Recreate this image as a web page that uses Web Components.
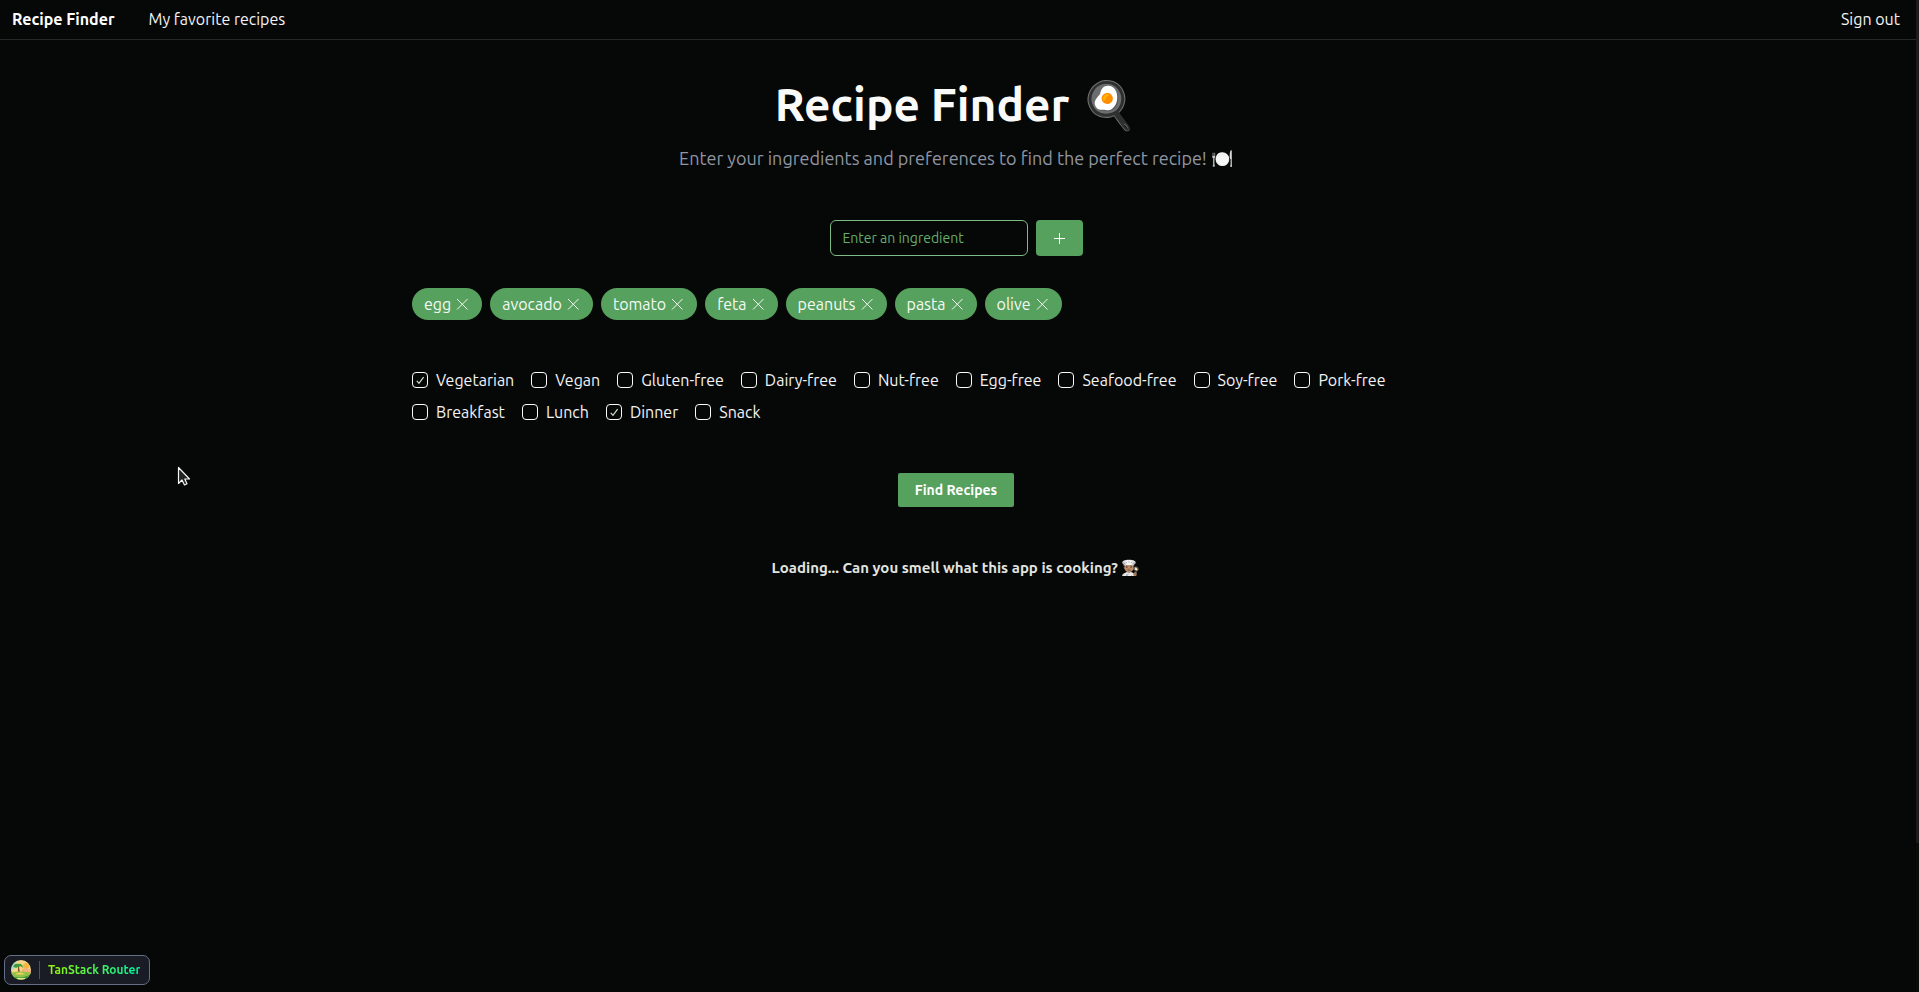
<!DOCTYPE html>
<html lang="en">
<head>
<meta charset="utf-8">
<title>Recipe Finder</title>
<style>
  html { background: #060807; }
  body { margin: 0; min-height: 100vh; color: #f4f4f5; font: 16px/24px Ubuntu, "Noto Sans", sans-serif; }
</style>
</head>
<body>
<recipe-app></recipe-app>
<script>
const define = (name, html, setup) => {
  const template = document.createElement('template');
  template.innerHTML = '<style>*{box-sizing:border-box}</style>' + html;
  customElements.define(name, class extends HTMLElement {
    constructor() {
      super();
      this.attachShadow({ mode: 'open' }).append(template.content.cloneNode(true));
    }
    connectedCallback() { if (setup) setup(this, this.shadowRoot); }
  });
};

define('site-header', `
<style>
  :host { display: block; border-bottom: 1px solid #27272a; }
  nav { display: flex; align-items: center; gap: 34px; height: 39px; padding: 0 16px 2px 12px; }
  a { color: #f4f4f5; text-decoration: none; }
  .brand { font-weight: 700; color: #fff; }
  .out { margin-left: auto; }
</style>
<nav>
  <a class="brand" href="#">Recipe Finder</a>
  <a href="#favorites">My favorite recipes</a>
  <a class="out" href="#signout">Sign out</a>
</nav>`);

define('page-hero', `
<style>
  :host { display: block; text-align: center; }
  h1 { margin: 0; font-size: 46px; line-height: 56px; font-weight: 700; color: #fafaf9; }
  p { margin: 12px 0 0; font-size: 18px; line-height: 28px; color: #9096a3; }
</style>
<h1><slot name="title"></slot></h1>
<p><slot></slot></p>`);

define('ingredient-form', `
<style>
  :host { display: block; }
  form { display: flex; justify-content: center; gap: 8px; }
  input { width: 198px; height: 36px; padding: 0 12px; border: 1px solid #7dba84; border-radius: 6px;
    background: transparent; color: #f4f4f5; font: 14px/20px Ubuntu, "Noto Sans", sans-serif; }
  input::placeholder { color: #66ae6c; opacity: 1; }
  button { display: grid; place-items: center; width: 47px; height: 36px; padding: 0; border: 0;
    border-radius: 4px; background: #56a15d; color: #fff; }
</style>
<form>
  <input type="text" aria-label="Ingredient" placeholder="Enter an ingredient">
  <button type="button" aria-label="Add ingredient">
    <svg width="15" height="15" viewBox="0 0 15 15" fill="none" stroke="currentColor"><path d="M7.5 2v11M2 7.5h11"/></svg>
  </button>
</form>`);

define('ingredient-tag', `
<style>
  :host { display: flex; align-items: center; gap: 3px; height: 32px; padding: 0 12px; border-radius: 16px;
    background: #56a15d; color: #f4faf4; }
  button { display: flex; padding: 0; border: 0; background: none; color: inherit; }
</style>
<slot></slot>
<button type="button" aria-label="Remove">
  <svg width="16" height="16" viewBox="0 0 16 16" fill="none" stroke="currentColor"><path d="M3 3l10.500 10.500M13.500 3L3 13.500"/></svg>
</button>`);

define('check-option', `
<style>
  :host { display: block; }
  label { display: flex; align-items: center; gap: 8px; }
  .box { display: grid; width: 16px; height: 16px; }
  input, svg { grid-area: 1 / 1; width: 16px; height: 16px; margin: 0; }
  input { appearance: none; border: 1px solid #fafafa; border-radius: 4px; }
  svg { visibility: hidden; pointer-events: none; }
  input:checked + svg { visibility: visible; }
</style>
<label>
  <span class="box">
    <input type="checkbox">
    <svg viewBox="0 0 16 16" fill="none" stroke="#cfe3d0" stroke-width="1.200"><path d="M4.800 8.800L7 11.400 11.600 5.200"/></svg>
  </span>
  <slot></slot>
</label>`, (host, root) => { root.querySelector('input').checked = host.hasAttribute('checked'); });

define('option-row', `
<style>:host { display: flex; flex-wrap: wrap; gap: 8px 17px; }</style>
<slot></slot>`);

define('submit-button', `
<style>
  :host { display: flex; justify-content: center; }
  button { height: 34px; padding: 0 17px; border: 0; border-radius: 2px; background: #56a15d; color: #fff;
    font: 700 14px/20px Ubuntu, "Noto Sans", sans-serif; }
</style>
<button type="button"><slot></slot></button>`);

define('status-message', `
<style>
  :host { display: block; text-align: center; font-size: 15px; font-weight: 700; color: #e2e4e0; }
</style>
<slot></slot>`);

define('router-badge', `
<style>
  :host { position: fixed; left: 4px; bottom: 7px; }
  button { display: flex; align-items: center; height: 30px; padding: 0 9px 0 6px; gap: 8px;
    border: 1px solid #667085; border-radius: 7px; background: #191c24;
    font: 700 12px/16px Ubuntu, "Noto Sans", sans-serif; }
  svg { display: block; }
  i { width: 1px; height: 18px; background: #475467; }
  span { background: linear-gradient(to right, #98f30c, #00f4a3); background-clip: text; color: transparent; }
</style>
<button type="button">
  <svg width="20" height="20" viewBox="0 0 20 20">
    <clipPath id="c"><circle cx="10" cy="10" r="10"/></clipPath>
    <g clip-path="url(#c)">
      <path fill="#f5d78a" d="M0 0h20v20H0z"/>
      <path fill="#a8dbc8" d="M0 0h6L4 8 0 11z"/>
      <circle cx="15" cy="6" r="3" fill="#f6b53c"/>
      <path fill="#f3b27a" d="M11 9l5-1 4 2v4h-9z"/>
      <path fill="#3f9b3a" d="M2 7c1-3 3-4 5-3 3-1 5 1 5 4-2-2-3-2-4-1-1 0-2 0-3 1-1-1-2-1-3-1z"/>
      <path fill="#8a4d24" d="M7 7h1l1 6H7z"/>
      <path fill="#8fc24a" d="M0 13c5-2 14-2 20 0v7H0z"/>
      <path fill="#efd05a" d="M4 14c3-2 7-2 10 0-3 1-7 1-10 0z"/>
      <path fill="#3f9a3c" d="M1 16c5 2 12 2 17-1l-2 4H4z"/>
      <path fill="#e3e79a" d="M6 18h8v1H6z"/>
    </g>
  </svg>
  <i></i><span>TanStack Router</span>
</button>`);

define('mouse-pointer', `
<style>:host { position: absolute; left: 177px; top: 466px; pointer-events: none; } svg { display: block; }</style>
<svg width="14" height="21" viewBox="0 0 14 21"><path d="M1.500 1.500v16l3.500-3.500 2.500 5 2.500-1.200-2.200-4.800h4.700z" fill="#242424" stroke="#f5f5f5" stroke-width="1.200" stroke-linejoin="round"/></svg>`);

define('recipe-app', `
<style>
  :host { display: grid; grid-template-columns: 1fr 3px; min-height: 100vh; }
  .track { background: linear-gradient(#211a1c, #211a1c) top / 100% 85% no-repeat #0b0b08; }
  main { max-width: 1088px; margin: 0 auto; padding: 36px 0 0; }
  .wrap { padding: 0 36px 0 32px; }
  ingredient-form { margin-top: 48px; }
  .tags { display: flex; flex-wrap: wrap; gap: 8px; margin-top: 32px; }
  .options { display: grid; gap: 8px; margin-top: 48px; }
  submit-button { margin-top: 49px; }
  status-message { margin-top: 49px; }
</style>
<div>
  <site-header></site-header>
  <div class="wrap">
    <main>
      <page-hero><span slot="title">Recipe Finder 🍳</span>Enter your ingredients and preferences to find the perfect recipe! 🍽️</page-hero>
      <ingredient-form></ingredient-form>
      <div class="tags">
        <ingredient-tag>egg</ingredient-tag>
        <ingredient-tag>avocado</ingredient-tag>
        <ingredient-tag>tomato</ingredient-tag>
        <ingredient-tag>feta</ingredient-tag>
        <ingredient-tag>peanuts</ingredient-tag>
        <ingredient-tag>pasta</ingredient-tag>
        <ingredient-tag>olive</ingredient-tag>
      </div>
      <div class="options">
        <option-row>
          <check-option checked>Vegetarian</check-option>
          <check-option>Vegan</check-option>
          <check-option>Gluten-free</check-option>
          <check-option>Dairy-free</check-option>
          <check-option>Nut-free</check-option>
          <check-option>Egg-free</check-option>
          <check-option>Seafood-free</check-option>
          <check-option>Soy-free</check-option>
          <check-option>Pork-free</check-option>
        </option-row>
        <option-row>
          <check-option>Breakfast</check-option>
          <check-option>Lunch</check-option>
          <check-option checked>Dinner</check-option>
          <check-option>Snack</check-option>
        </option-row>
      </div>
      <submit-button>Find Recipes</submit-button>
      <status-message>Loading... Can you smell what this app is cooking? 👨🏽‍🍳</status-message>
    </main>
  </div>
</div>
<div class="track"></div>
<router-badge></router-badge>
<mouse-pointer></mouse-pointer>`);
</script>
</body>
</html>
